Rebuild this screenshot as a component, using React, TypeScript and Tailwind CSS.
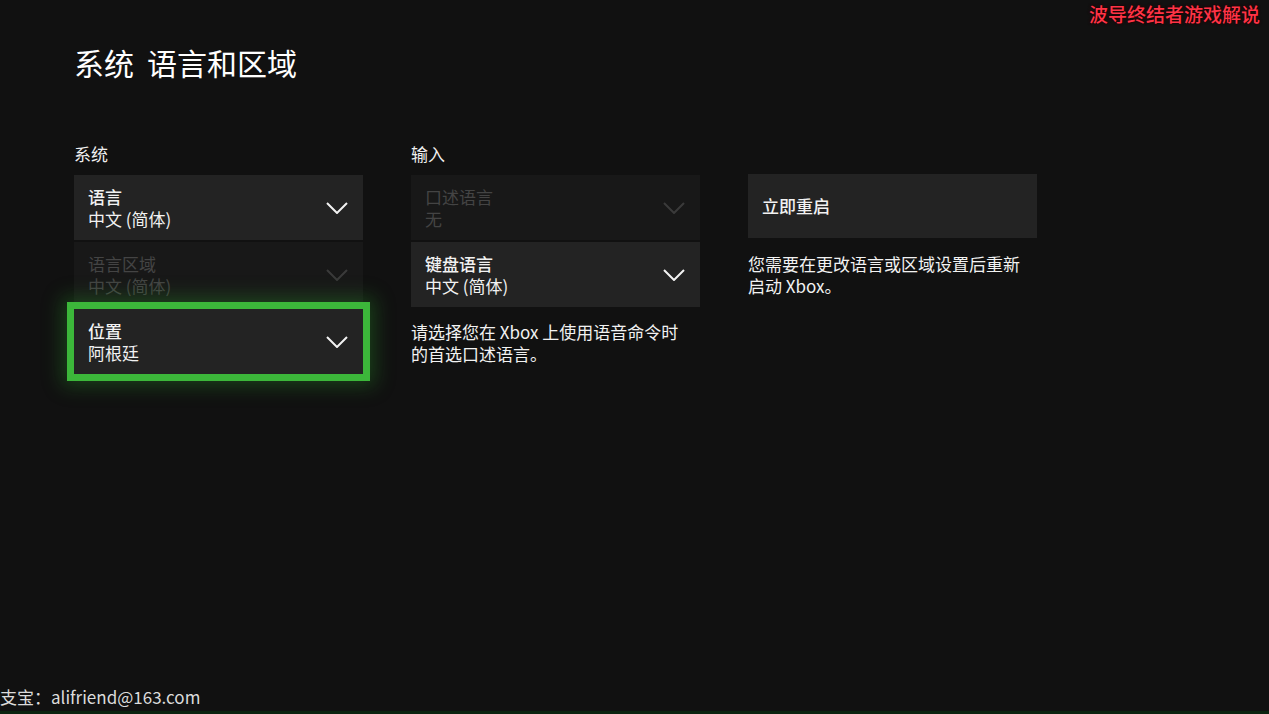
import React from "react";

const font = { fontFamily: '"Noto Sans CJK SC", "Noto Sans", sans-serif' };

function Chevron({ dim }: { dim?: boolean }) {
  return (
    <svg width="22" height="12" viewBox="0 0 22 12" className="shrink-0">
      <polyline
        points="1,1 11,11 21,1"
        fill="none"
        stroke={dim ? "#3a3a3a" : "#f2f2f2"}
        strokeWidth="2"
      />
    </svg>
  );
}

function Dropdown({
  title,
  value,
  disabled,
  focused,
}: {
  title: string;
  value: string;
  disabled?: boolean;
  focused?: boolean;
}) {
  return (
    <div
      className={
        "relative flex h-[65px] items-center justify-between pl-[14px] pr-[15px] " +
        (disabled ? "bg-[#181818] " : "bg-[#232323] ") +
        (focused
          ? "z-10 outline-[7px] outline-solid outline-[#3cb73a] shadow-[0_0_18px_12px_rgba(40,150,40,0.35)]"
          : "")
      }
    >
      <div className={"flex flex-col text-[17px] leading-[22px] " + (disabled ? "text-[#444444]" : "text-[#f2f2f2]")}>
        <span className={disabled ? "" : "font-medium"}>{title}</span>
        <span>{value}</span>
      </div>
      <Chevron dim={disabled} />
    </div>
  );
}

export default function App() {
  return (
    <div
      className="relative flex h-[714px] w-[1269px] flex-col overflow-hidden bg-[#111111] text-white"
      style={font}
    >
      <div className="absolute right-[9px] top-[1px] text-[19px] font-medium leading-[26px] text-[#ff3346] [text-shadow:0_0_2px_#000,0_0_3px_#400]">
        波导终结者游戏解说
      </div>

      <div className="flex flex-1 flex-col pl-[74px] pt-[43px]">
        <h1 className="flex text-[30px] font-normal leading-[38px] text-white">
          <span>系统</span>
          <span className="ml-[13px]">语言和区域</span>
        </h1>

        <div className="mt-[62px] flex gap-[48px]">
          <div className="flex w-[289px] flex-col">
            <div className="mb-[10px] h-[22px] text-[17px] leading-[22px] text-[#f0f0f0]">系统</div>
            <div className="flex flex-col gap-[2px]">
              <Dropdown title="语言" value="中文 (简体)" />
              <Dropdown title="语言区域" value="中文 (简体)" disabled />
              <Dropdown title="位置" value="阿根廷" focused />
            </div>
          </div>

          <div className="flex w-[289px] flex-col">
            <div className="mb-[10px] h-[22px] text-[17px] leading-[22px] text-[#f0f0f0]">输入</div>
            <div className="flex flex-col gap-[2px]">
              <Dropdown title="口述语言" value="无" disabled />
              <Dropdown title="键盘语言" value="中文 (简体)" />
            </div>
            <p className="mt-[14px] text-[17px] leading-[22px] text-[#f2f2f2]">
              请选择您在 Xbox 上使用语音命令时
              <br />
              的首选口述语言。
            </p>
          </div>

          <div className="flex w-[289px] flex-col">
            <div className="mb-[9px] h-[22px]" />
            <div className="flex h-[64px] items-center bg-[#232323] pl-[14px] text-[17px] font-medium text-[#f2f2f2]">
              立即重启
            </div>
            <p className="mt-[15px] text-[17px] leading-[22px] text-[#f2f2f2]">
              您需要在更改语言或区域设置后重新
              <br />
              启动 Xbox。
            </p>
          </div>
        </div>
      </div>

      <div className="pb-[3px] text-[17px] leading-[22px] text-[#dcdcdc]">支宝：alifriend@163.com</div>
      <div className="h-[3px] bg-[#0c2410]" />
    </div>
  );
}
